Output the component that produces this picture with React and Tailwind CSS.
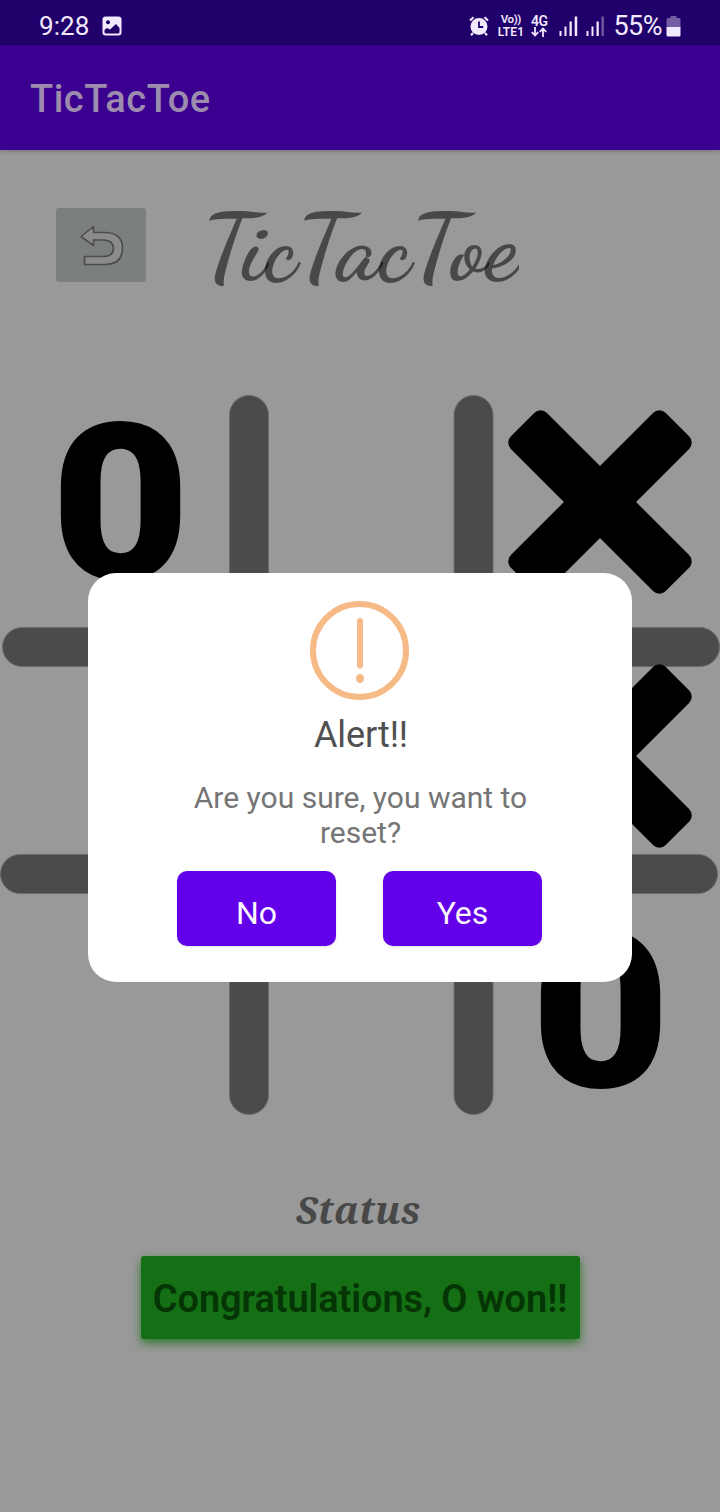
import React from "react";

function StatusBar() {
  return (
    <div className="flex h-[45px] items-center bg-[#20006a] pl-[39px] pr-[39px] pt-[7px] text-[#f1e9fc]">
      <span className="text-[26px] leading-none tracking-[0.1px]">9:28</span>
      <svg className="ml-[12px]" width="20" height="20" viewBox="0 0 20 20">
        <rect x="0.500" y="0.500" width="19" height="19" rx="3" fill="currentColor" />
        <circle cx="6" cy="6.200" r="2" fill="#20006a" />
        <path d="M2.500 14l2.500-2 3 1.500 6-5.500 3.500 4v4q0 1.500-1.500 1.500H4Q2.500 17.500 2.500 16z" fill="#20006a" />
      </svg>
      <div className="flex-1" />
      <svg width="20" height="20" viewBox="0 0 20 20" fill="none" stroke="currentColor">
        <circle cx="10" cy="10.500" r="8.500" fill="currentColor" stroke="none" />
        <path d="M1 4.500L4.500 1.200M19 4.500L15.500 1.200M4 17l-2 2.200M16 17l2 2.200" strokeWidth="2.200" />
        <path d="M10 5.500v5.500h4.200" stroke="#20006a" strokeWidth="1.800" />
      </svg>
      <div className="ml-[8px] flex w-[27px] flex-col items-center font-semibold">
        <span className="text-[11.500px] leading-[11.500px] tracking-[-0.4px]">Vo))</span>
        <span className="text-[12px] leading-[12px] tracking-[0.1px]">LTE1</span>
      </div>
      <div className="ml-[6px] flex w-[18px] flex-col items-center">
        <span className="text-[14px] font-semibold leading-[12px] tracking-[-0.3px]">4G</span>
        <svg width="16" height="10" viewBox="0 0 16 10" fill="none" stroke="currentColor" strokeWidth="1.800">
          <path d="M4 0v8.500M0.800 5.200L4 8.500l3.200-3.300M12 10V1.500M8.800 4.800L12 1.500l3.200 3.300" />
        </svg>
      </div>
      <svg className="ml-[11px]" width="46" height="20" viewBox="0 0 46 20" fill="currentColor">
        <rect x="0.500" y="15" width="2" height="5" />
        <rect x="5.500" y="10.500" width="2" height="9.500" />
        <rect x="10.500" y="5.500" width="2.300" height="14.500" />
        <rect x="15.700" y="0.500" width="2.500" height="19.500" />
        <rect x="27.500" y="15" width="2" height="5" />
        <rect x="32.500" y="10.500" width="2" height="9.500" />
        <rect x="37.500" y="5.500" width="2.300" height="14.500" />
        <rect x="42.500" y="0.500" width="2.300" height="19.500" opacity="0.400" />
      </svg>
      <span className="ml-[8px] text-[27px] leading-none tracking-[-0.500px]">55%</span>
      <svg className="ml-[4px]" width="15" height="21" viewBox="0 0 15 21" fill="currentColor">
        <path opacity="0.400" d="M4.500 0h6v2H13q1.500 0 1.500 1.500V11H0.500V3.500Q0.500 2 2 2h2.500z" />
        <path d="M0.500 11h14v8q0 1.500-1.500 1.500H2Q0.500 20.500 0.500 19z" />
      </svg>
    </div>
  );
}

function CrossMark() {
  return (
    <svg width="186" height="186" viewBox="-93 -93 186 186" fill="#000">
      <rect x="-109.500" y="-25.500" width="219" height="51" rx="9" transform="rotate(45)" />
      <rect x="-109.500" y="-25.500" width="219" height="51" rx="9" transform="rotate(-45)" />
    </svg>
  );
}

function NoughtMark() {
  return <span className="scale-x-[1.1] pt-[4px] text-[219px] font-black leading-[250px] text-black">0</span>;
}

const cells = ["O", "", "X", "", "", "X", "", "", "O"];

function Board() {
  return (
    <div className="relative h-[762px] w-[720px]">
      <svg className="absolute inset-0" width="720" height="762" fill="#4b4b4b" stroke="#6b6b6b" strokeWidth="1">
        <rect x="229.500" y="20.500" width="39" height="719" rx="19.500" />
        <rect x="454" y="20.500" width="39" height="719" rx="19.500" />
        <rect x="2.500" y="252.500" width="717" height="39" rx="19.500" />
        <rect x="0.500" y="479.500" width="717" height="39" rx="19.500" />
      </svg>
      <div className="relative grid h-full grid-cols-3 grid-rows-3">
        {cells.map((c, i) => (
          <div key={i} className="flex min-h-0 items-center justify-center">
            {c === "X" && <CrossMark />}
            {c === "O" && <NoughtMark />}
          </div>
        ))}
      </div>
    </div>
  );
}

function AlertDialog() {
  return (
    <div className="absolute inset-0 flex items-start justify-center pt-[573px]">
      <div className="flex h-[409px] w-[544px] flex-col items-center rounded-[28px] bg-white pt-[28px]">
        <svg width="100" height="100" viewBox="0 0 100 100" fill="none" stroke="#f5ba85">
          <circle cx="49.500" cy="49.500" r="46.500" strokeWidth="6" />
          <path d="M50 20v44.500" strokeWidth="6" strokeLinecap="round" />
          <ellipse cx="50" cy="77.500" rx="4" ry="4.500" fill="#f5ba85" stroke="none" />
        </svg>
        <h2 className="mt-[14px] pl-[2px] text-[36px] leading-[41px] tracking-[-0.1px] text-[#505050]">Alert!!</h2>
        <p className="mt-[24px] w-[360px] pl-[1px] text-center text-[30px] leading-[35px] text-[#757575]">
          Are you sure, you want to reset?
        </p>
        <div className="mt-[21px] flex gap-[47px] pr-[1px]">
          <button className="h-[75px] w-[159px] rounded-[10px] bg-[#6200ea] pt-[9px] text-[32px] leading-none text-[#fbf5ff] shadow-sm">
            No
          </button>
          <button className="h-[75px] w-[159px] rounded-[10px] bg-[#6200ea] pt-[9px] text-[32px] leading-none text-[#fbf5ff] shadow-sm">
            Yes
          </button>
        </div>
      </div>
    </div>
  );
}

export default function App() {
  return (
    <div className="relative h-[1512px] w-[720px] overflow-hidden bg-[#999999] font-['Roboto',sans-serif]">
      <StatusBar />
      <header className="flex h-[105px] items-center bg-[#3b008f] pl-[30px] pt-[3px] shadow-[0_1px_4px_rgba(0,0,0,0.25)]">
        <h1 className="text-[38px] font-medium leading-none tracking-[0.5px] text-[#9c8cae]">TicTacToe</h1>
      </header>
      <div className="flex h-[225px] items-start pl-[56px] pt-[58px]">
        <button className="flex h-[74px] w-[90px] items-center justify-center rounded-[3px] bg-[#7b7f7d]">
          <svg width="46" height="42" viewBox="0 0 46 42" fill="#8b8b8b" stroke="#4c4c4c" strokeWidth="1.600" strokeLinejoin="round">
            <path d="M3 12.500L15.500 2.500V8.500H27Q44.500 9 44.500 24Q44.500 40.500 27 40.500H6.500V32.500H26Q35.500 32 35.500 24.500Q35.500 16.500 26 16H15.500V21.500Z" />
          </svg>
        </button>
        <div className="ml-[56px] w-[317px] overflow-x-clip whitespace-nowrap font-['Dancing_Script',cursive] text-[94px] font-bold leading-[80px] text-black/53">
          TicTacToe
        </div>
      </div>
      <Board />
      <div className="flex flex-col items-center pt-[46px]">
        <div className="pr-[4px] font-['Noto_Serif','DejaVu_Serif',serif] text-[38px] font-bold italic leading-[52px] text-[#484848]">
          Status
        </div>
        <div className="mt-[21px] flex h-[83px] w-[439px] items-center justify-center rounded-[3px] bg-[#156f15] pt-[3px] text-[38px] font-semibold leading-none text-[#053505] shadow-[0_4px_10px_rgba(21,111,21,0.8)]">
          <span className="whitespace-nowrap tracking-[-0.1px]">Congratulations, O won!!</span>
        </div>
      </div>
      <AlertDialog />
    </div>
  );
}
